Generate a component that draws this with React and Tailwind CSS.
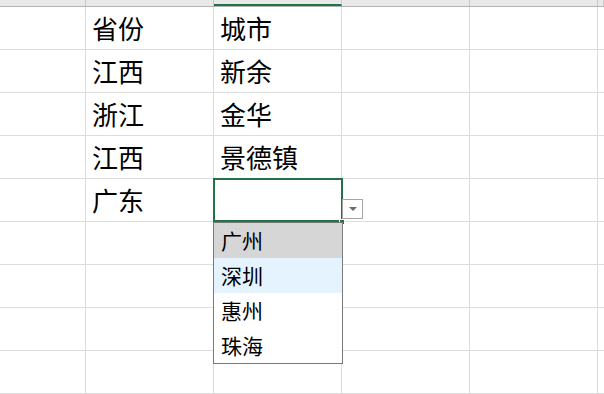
const cols = [86, 128, 128, 128, 128, 6];

const rows = [
  ["", "省份", "城市"],
  ["", "江西", "新余"],
  ["", "浙江", "金华"],
  ["", "江西", "景德镇"],
  ["", "广东", ""],
  ["", "", ""],
  ["", "", ""],
  ["", "", ""],
  ["", "", ""],
];

const options = ["广州", "深圳", "惠州", "珠海"];

function DropdownCell() {
  return (
    <div className="relative h-full w-full">
      {/* active cell frame + fill handle */}
      <div className="pointer-events-none absolute -left-px -top-px h-[44px] w-[130px] border-2 border-[#217346]" />
      <div className="absolute left-[125px] top-[40px] h-[6px] w-[6px] border border-white bg-[#217346]" />

      {/* list arrow button */}
      <div className="absolute left-[128px] top-[20px] flex h-[20px] w-[21px] items-center justify-center border border-[#a6a6a6] bg-white">
        <div className="h-0 w-0 border-x-[4px] border-t-[4px] border-x-transparent border-t-[#6b6b6b]" />
      </div>

      {/* validation list */}
      <div className="absolute left-[-1px] top-[43px] z-10 flex w-[130px] flex-col border border-[#7a7a7a] bg-white">
        {options.map((o, i) => (
          <div
            key={o}
            className={
              "flex h-[35px] items-center pl-[7px] text-[21px] leading-none text-black " +
              (i === 0 ? "bg-[#d6d6d6]" : i === 1 ? "bg-[#e5f3ff]" : "bg-white")
            }
          >
            {o}
          </div>
        ))}
      </div>
    </div>
  );
}

export default function App() {
  return (
    <div
      className="h-[394px] w-[604px] overflow-hidden bg-white"
      style={{ fontFamily: '"Noto Sans CJK SC", "Noto Sans", sans-serif' }}
    >
      {/* column header strip */}
      <div className="flex h-[7px] border-b border-[#b4b4b4] bg-[#e9e9e9]">
        {cols.map((w, i) => (
          <div
            key={i}
            style={{ width: w }}
            className={
              "h-full shrink-0 border-r border-[#c8c8c8] " +
              (i === 2 ? "border-b-2 border-b-[#217346]" : "")
            }
          />
        ))}
      </div>

      {rows.map((r, ri) => {
        const active = ri === 4;
        return (
          <div key={ri} className="flex h-[43px] border-b border-[#dcdcdc]">
            {cols.map((w, ci) => (
              <div
                key={ci}
                style={{ width: w }}
                className={
                  "flex h-full shrink-0 items-center border-r border-[#dcdcdc] text-[26px] leading-none text-black " +
                  (active && ci === 2 ? "" : "pl-[6px]")
                }
              >
                {active && ci === 2 ? <DropdownCell /> : r[ci] || ""}
              </div>
            ))}
          </div>
        );
      })}
    </div>
  );
}
